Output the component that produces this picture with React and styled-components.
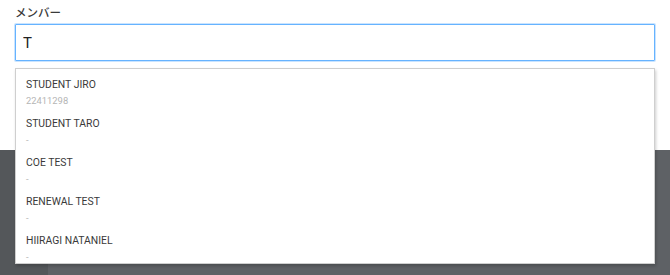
import React, { useState } from "react";
import styled, { createGlobalStyle } from "styled-components";

const members = [
  { name: "STUDENT JIRO", code: "22411298" },
  { name: "STUDENT TARO", code: "-" },
  { name: "COE TEST", code: "-" },
  { name: "RENEWAL TEST", code: "-" },
  { name: "HIIRAGI NATANIEL", code: "-" },
];

const App = () => {
  const [query, setQuery] = useState("T");

  return (
    <>
      <GlobalStyle />
      <StyledPage>
        <StyledPanel>
          <Field>
            <Label>メンバー</Label>
            <Input value={query} onChange={(e) => setQuery(e.target.value)} />
            <Menu>
              {members.map((m) => (
                <Option key={m.name}>
                  <span className="name">{m.name}</span>
                  <span className="code">{m.code}</span>
                </Option>
              ))}
            </Menu>
          </Field>
        </StyledPanel>
        <Backdrop>
          <Sidebar />
          <Main />
        </Backdrop>
      </StyledPage>
    </>
  );
};

const GlobalStyle = createGlobalStyle`
  html, body {
    margin: 0;
    padding: 0;
    height: 100%;
    background: #5e6165;
    font-family: Roboto, "Noto Sans CJK JP", sans-serif;
  }
  #root { height: 100%; }
`;

const StyledPage = styled.div`
  display: flex;
  flex-direction: column;
  height: 275px;
`;

const StyledPanel = styled.div`
  background: #ffffff;
  height: 150px;
  padding: 5px 15px 0;
  box-sizing: border-box;
`;

const Field = styled.div`
  position: relative;
  display: flex;
  flex-direction: column;
`;

const Label = styled.label`
  font-family: "Noto Sans CJK JP", sans-serif;
  font-size: 11.5px;
  font-weight: 500;
  color: #3a3a3a;
  line-height: 15px;
  margin-bottom: 4px;
`;

const Input = styled.input`
  height: 37px;
  box-sizing: border-box;
  border: 1px solid #66b3ff;
  box-shadow: 0 0 0 1px rgba(102, 179, 255, 0.35);
  border-radius: 1px;
  padding: 0 7px;
  font-family: Roboto, sans-serif;
  font-size: 15px;
  color: #222222;
  outline: none;
`;

const Menu = styled.ul`
  position: absolute;
  top: 63px;
  left: 0;
  right: 0;
  margin: 0;
  padding: 4px 0 0;
  list-style: none;
  background: #ffffff;
  border: 1px solid #cfcfcf;
  box-shadow: 1px 2px 3px rgba(0, 0, 0, 0.2);
  height: 196px;
  box-sizing: border-box;
  overflow: hidden;
`;

const Option = styled.li`
  display: flex;
  flex-direction: column;
  padding: 4px 10px 0;
  height: 39px;
  box-sizing: border-box;

  & .name {
    font-size: 10.4px;
    color: #3a3a3a;
    line-height: 16px;
  }
  & .code {
    font-size: 9.4px;
    color: #b5b5b5;
    line-height: 15px;
  }
`;

const Backdrop = styled.div`
  flex: 1;
  display: flex;
`;

const Sidebar = styled.div`
  width: 48px;
  background: #54575a;
`;

const Main = styled.div`
  flex: 1;
  background: #5e6165;
`;

export default App;
